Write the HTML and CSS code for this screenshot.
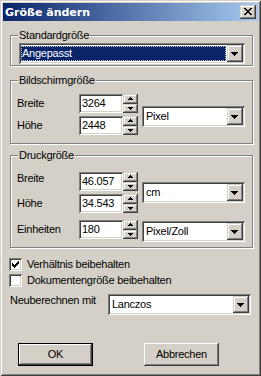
FILE: index.html
```html
<!DOCTYPE html>
<html lang="de">
<head>
<meta charset="utf-8">
<title>Größe ändern</title>
<link rel="stylesheet" href="styles.css">
</head>
<body>
<div class="window">
  <div class="titlebar">
    <span class="title">Größe ändern</span>
    <span class="close raised">
      <svg width="16" height="14" viewBox="0 0 16 14" shape-rendering="crispEdges"><path fill="#000" d="M4 3h2v1H4zM10 3h2v1h-2zM5 4h2v1H5zM9 4h2v1H9zM6 5h4v1H6zM7 6h2v1H7zM6 7h4v1H6zM5 8h2v1H5zM9 8h2v1H9zM4 9h2v1H4zM10 9h2v1h-2z"/></svg>
    </span>
  </div>
  <div class="client">
    <fieldset class="group g1">
      <legend>Standardgröße</legend>
      <div class="combo sunken">
        <span class="val sel">Angepasst</span>
        <span class="drop raised"><svg width="16" height="17" viewBox="0 0 16 17" shape-rendering="crispEdges"><path fill="#000" d="M4 7h7v1H4zM5 8h5v1H5zM6 9h3v1H6zM7 10h1v1H7z"/></svg></span>
      </div>
    </fieldset>

    <fieldset class="group g2">
      <legend>Bildschirmgröße</legend>
      <div class="fields">
        <span class="lbl">Breite</span>
        <span class="edit sunken">3264</span>
        <span class="spin"><span class="up raised"><svg width="15" height="10" viewBox="0 0 15 10" shape-rendering="crispEdges"><path fill="#000" d="M7 3h1v1H7zM6 4h3v1H6zM5 5h5v1H5z"/></svg></span><span class="dn raised"><svg width="15" height="9" viewBox="0 0 15 9" shape-rendering="crispEdges"><path fill="#000" d="M5 3h5v1H5zM6 4h3v1H6zM7 5h1v1H7z"/></svg></span></span>
        <div class="combo sunken unit u-px">
          <span class="val">Pixel</span>
          <span class="drop raised"><svg width="16" height="17" viewBox="0 0 16 17" shape-rendering="crispEdges"><path fill="#000" d="M4 7h7v1H4zM5 8h5v1H5zM6 9h3v1H6zM7 10h1v1H7z"/></svg></span>
        </div>
        <span class="lbl">Höhe</span>
        <span class="edit sunken">2448</span>
        <span class="spin"><span class="up raised"><svg width="15" height="10" viewBox="0 0 15 10" shape-rendering="crispEdges"><path fill="#000" d="M7 3h1v1H7zM6 4h3v1H6zM5 5h5v1H5z"/></svg></span><span class="dn raised"><svg width="15" height="9" viewBox="0 0 15 9" shape-rendering="crispEdges"><path fill="#000" d="M5 3h5v1H5zM6 4h3v1H6zM7 5h1v1H7z"/></svg></span></span>
      </div>
    </fieldset>

    <fieldset class="group g3">
      <legend>Druckgröße</legend>
      <div class="fields">
        <span class="lbl lbl-up">Breite</span>
        <span class="edit sunken">46.057</span>
        <span class="spin"><span class="up raised"><svg width="15" height="10" viewBox="0 0 15 10" shape-rendering="crispEdges"><path fill="#000" d="M7 3h1v1H7zM6 4h3v1H6zM5 5h5v1H5z"/></svg></span><span class="dn raised"><svg width="15" height="9" viewBox="0 0 15 9" shape-rendering="crispEdges"><path fill="#000" d="M5 3h5v1H5zM6 4h3v1H6zM7 5h1v1H7z"/></svg></span></span>
        <div class="combo sunken unit u-cm">
          <span class="val">cm</span>
          <span class="drop raised"><svg width="16" height="17" viewBox="0 0 16 17" shape-rendering="crispEdges"><path fill="#000" d="M4 7h7v1H4zM5 8h5v1H5zM6 9h3v1H6zM7 10h1v1H7z"/></svg></span>
        </div>
        <span class="lbl">Höhe</span>
        <span class="edit sunken">34.543</span>
        <span class="spin"><span class="up raised"><svg width="15" height="10" viewBox="0 0 15 10" shape-rendering="crispEdges"><path fill="#000" d="M7 3h1v1H7zM6 4h3v1H6zM5 5h5v1H5z"/></svg></span><span class="dn raised"><svg width="15" height="9" viewBox="0 0 15 9" shape-rendering="crispEdges"><path fill="#000" d="M5 3h5v1H5zM6 4h3v1H6zM7 5h1v1H7z"/></svg></span></span>
        <span class="lbl">Einheiten</span>
        <span class="edit sunken">180</span>
        <span class="spin"><span class="up raised"><svg width="15" height="10" viewBox="0 0 15 10" shape-rendering="crispEdges"><path fill="#000" d="M7 3h1v1H7zM6 4h3v1H6zM5 5h5v1H5z"/></svg></span><span class="dn raised"><svg width="15" height="9" viewBox="0 0 15 9" shape-rendering="crispEdges"><path fill="#000" d="M5 3h5v1H5zM6 4h3v1H6zM7 5h1v1H7z"/></svg></span></span>
        <div class="combo sunken unit u-res">
          <span class="val">Pixel/Zoll</span>
          <span class="drop raised"><svg width="16" height="17" viewBox="0 0 16 17" shape-rendering="crispEdges"><path fill="#000" d="M4 7h7v1H4zM5 8h5v1H5zM6 9h3v1H6zM7 10h1v1H7z"/></svg></span>
        </div>
      </div>
    </fieldset>

    <div class="checks">
      <div class="check">
        <span class="cb sunken"><svg width="13" height="13" viewBox="0 0 13 13" shape-rendering="crispEdges"><path fill="#000" d="M3 5h1v3H3zM4 6h1v3H4zM5 7h1v3H5zM6 6h1v3H6zM7 5h1v3H7zM8 4h1v3H8zM9 3h1v3H9z"/></svg></span>
        <span>Verhältnis beibehalten</span>
      </div>
      <div class="check">
        <span class="cb sunken"></span>
        <span>Dokumentengröße beibehalten</span>
      </div>
    </div>

    <div class="resample">
      <span class="rlbl">Neuberechnen mit</span>
      <div class="combo sunken rcombo">
        <span class="val">Lanczos</span>
        <span class="drop raised"><svg width="16" height="17" viewBox="0 0 16 17" shape-rendering="crispEdges"><path fill="#000" d="M4 7h7v1H4zM5 8h5v1H5zM6 9h3v1H6zM7 10h1v1H7z"/></svg></span>
      </div>
    </div>

    <div class="buttons">
      <button class="btn default">OK</button>
      <button class="btn">Abbrechen</button>
    </div>
  </div>
</div>
</body>
</html>
```

FILE: styles.css
```css
* {
  box-sizing: border-box;
}

body {
  margin: 0;
  background: #d4d0c8;
  font-family: "Liberation Sans", Arial, sans-serif;
  font-size: 11px;
  letter-spacing: -0.25px;
  color: #000;
}

svg {
  display: block;
}

.window {
  width: 261px;
  height: 376px;
  padding: 3px;
  background: #d4d0c8;
  box-shadow: inset 1px 1px #d4d0c8, inset -1px -1px #404040, inset 2px 2px #fff, inset -2px -2px #808080;
  display: flex;
  flex-direction: column;
}

.titlebar {
  height: 18px;
  flex: none;
  display: flex;
  align-items: flex-start;
  padding: 0 2px;
  background: linear-gradient(to right, #0a246a, #a6caf0);
}

.title {
  flex: 1;
  font-family: "DejaVu Sans", Verdana, sans-serif;
  font-weight: bold;
  font-size: 11px;
  letter-spacing: 0;
  line-height: 16px;
  padding-top: 2px;
  color: #fff;
  white-space: nowrap;
}

.close {
  width: 16px;
  height: 14px;
  margin-top: 2px;
}

.raised {
  background: #d4d0c8;
  box-shadow: inset -1px -1px #404040, inset 1px 1px #d4d0c8, inset -2px -2px #808080, inset 2px 2px #fff;
}

.sunken {
  background: #fff;
  box-shadow: inset 1px 1px #808080, inset -1px -1px #fff, inset 2px 2px #404040, inset -2px -2px #d4d0c8;
}

.client {
  flex: 1;
  display: flex;
  flex-direction: column;
  padding: 0 5px 0 7px;
}

.group {
  margin: 0;
  min-width: 0;
  border: 1px solid #808080;
  box-shadow: inset 1px 1px #fff, 1px 1px #fff;
}

.group legend {
  padding: 0 1px;
  margin-left: -1px;
  line-height: 13px;
  background: #d4d0c8;
}

.g1 {
  margin-top: 8px;
  padding: 1px 7px 1px 8px;
}

.g2 {
  margin-top: 8px;
  padding: 7px 7px 8px 8px;
}

.g3 {
  margin-top: 5px;
  padding: 10px 7px 5px 8px;
}

.combo {
  display: flex;
  height: 21px;
  padding: 2px;
}

.combo .val {
  flex: 1;
  line-height: 17px;
  padding-left: 2px;
  white-space: nowrap;
}

.combo .val.sel {
  margin: 1px 1px 1px 0;
  padding-left: 1px;
  line-height: 15px;
  background: #0a246a;
  color: #fff;
  outline: 1px dotted #c8c8c8;
  outline-offset: -1px;
}

.combo .drop {
  width: 16px;
  height: 17px;
  flex: none;
}

.fields {
  display: grid;
  grid-template-columns: 62px 44px 15px 107px;
  align-items: start;
  margin-left: -2px;
}

.g2 .fields {
  grid-template-rows: 19px 19px;
  row-gap: 3px;
}

.g3 .fields {
  grid-template-rows: 22px 26px 22px;
}

.lbl {
  line-height: 19px;
  white-space: nowrap;
}

.lbl-up {
  margin-top: -3px;
}

.edit {
  height: 19px;
  line-height: 19px;
  padding-left: 3px;
  white-space: nowrap;
}

.spin {
  display: flex;
  flex-direction: column;
  height: 19px;
}

.spin .up {
  height: 10px;
}

.spin .dn {
  height: 9px;
}

.unit {
  grid-column: 4;
  justify-self: end;
  width: 103px;
}

.u-px {
  grid-row: 1 / span 2;
  margin-top: 12px;
}

.u-cm {
  grid-row: 1 / span 2;
  margin-top: 10px;
}

.u-res {
  grid-row: 3;
  margin-top: 1px;
}

.checks {
  margin-top: 8px;
}

.check {
  display: flex;
  align-items: center;
  height: 16px;
  white-space: nowrap;
}

.cb {
  width: 13px;
  height: 13px;
  margin-left: -1px;
  margin-right: 5px;
  flex: none;
}

.resample {
  display: flex;
  align-items: flex-start;
  margin-top: 6px;
}

.rlbl {
  width: 98px;
  line-height: 13px;
  white-space: nowrap;
}

.rcombo {
  width: 143px;
}

.buttons {
  display: flex;
  gap: 51px;
  margin-top: 28px;
  padding-left: 8px;
}

.btn {
  appearance: none;
  border: 0;
  margin: 0;
  padding: 0;
  width: 75px;
  height: 23px;
  font: inherit;
  letter-spacing: inherit;
  color: #000;
  line-height: 23px;
  background: #d4d0c8;
  box-shadow: inset -1px -1px #404040, inset 1px 1px #fff, inset -2px -2px #808080;
}

.btn.default {
  box-shadow: inset 0 0 0 1px #000, inset -2px -2px #404040, inset 2px 2px #fff, inset -3px -3px #808080;
}
```
